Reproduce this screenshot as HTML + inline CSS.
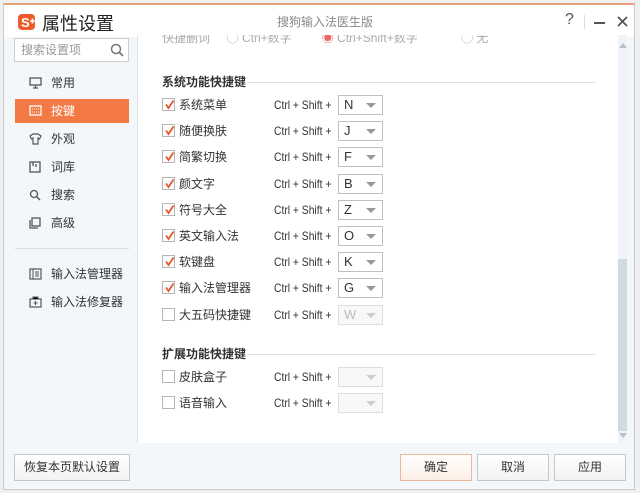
<!DOCTYPE html>
<html><head><meta charset="utf-8"><style>
*{margin:0;padding:0;box-sizing:border-box}
body{width:640px;height:493px;background:#f0f0f0;position:relative;overflow:hidden;font-family:"Liberation Sans","Noto Sans CJK SC",sans-serif;font-size:12px;color:#333}
.win{position:absolute;left:3px;top:3px;width:632px;height:487px;background:#f4f7fa;border:1px solid #c8ccd0;border-top:2px solid #e8a37a}
.a{position:absolute}
.title{left:0;top:0;width:630px;height:32px;background:#fff}
.content{left:133px;top:30px;width:490px;height:408px;background:#fff;border-left:1px solid #dde2e6;overflow:hidden}
.nav{position:absolute;left:0;width:125px;height:24px;line-height:24px;font-size:12px;color:#333}
.nav span.t{position:absolute;left:36px}
.nav svg{position:absolute;left:14px;top:6px}
.cb{position:absolute;width:13px;height:13px;border:1px solid #b5b5b5;background:#fff}
.cb svg{position:absolute;left:1px;top:0}
.lbl{position:absolute;font-size:12px;color:#333;line-height:16px}
.cs{position:absolute;font-size:12px;color:#333;line-height:16px;transform:scaleX(0.86);transform-origin:0 0;white-space:nowrap}
.dd{position:absolute;width:45px;height:20px;border:1px solid #bfbfbf;background:#fff;font-size:13px;line-height:18px;padding-left:5px}
.dd:after{content:"";position:absolute;right:6px;top:7px;border-left:5px solid transparent;border-right:5px solid transparent;border-top:5px solid #999}
.dd.dis{border-color:#ddd;color:#bbb;background:#f8f8f8}
.dd.dis:after{border-top-color:#ccc}
.h{position:absolute;font-weight:bold;font-size:12px;color:#333}
.ln{position:absolute;height:1px;background:#dde2e6}
.btn{position:absolute;height:27px;border:1px solid #c6c6c6;background:linear-gradient(#fff,#f2f2f2);text-align:center;line-height:25px;font-size:12px;color:#333}
</style></head><body>
<div class="win">
<div class="a title"></div>
<svg class="a" style="left:13px;top:7px" width="20" height="20" viewBox="0 0 20 20"><rect x="1" y="2" width="17" height="16" rx="4" fill="#ef5a2a"/><text x="4" y="15" font-size="13" font-weight="bold" fill="#fff" font-family="Liberation Sans">S</text><path d="M13 9h5M15.5 6.5v5" stroke="#fff" stroke-width="1.6"/></svg>
<div class="a" style="left:38px;top:5px;font-size:18px;color:#222">属性设置</div>
<div class="a" style="left:273px;top:8px;font-size:12px;color:#888">搜狗输入法医生版</div>
<div class="a" style="left:561px;top:6px;font-size:16px;color:#555">?</div>
<div class="a" style="left:580px;top:10px;width:1px;height:14px;background:#ddd"></div>
<div class="a" style="left:590px;top:17px;width:11px;height:2px;background:#555"></div>
<svg class="a" style="left:613px;top:11px" width="11" height="11"><path d="M1 1L10 10M10 1L1 10" stroke="#555" stroke-width="1.8"/></svg>

<div class="a" style="left:10px;top:33px;width:115px;height:24px;border:1px solid #c9cdd1;background:#fff;color:#999;font-size:12px;line-height:22px;padding-left:6px">搜索设置项
<svg style="position:absolute;right:4px;top:4px" width="14" height="14"><circle cx="6" cy="6" r="4.5" fill="none" stroke="#777" stroke-width="1.5"/><path d="M9.5 9.5L13 13" stroke="#777" stroke-width="1.8"/></svg></div>

<div class="nav" style="left:11px;top:66px"><svg width="13" height="12"><rect x="1" y="1" width="11" height="7" fill="none" stroke="#555" stroke-width="1.3"/><path d="M4 11h5M6.5 8v3" stroke="#555" stroke-width="1.3"/></svg><span class="t">常用</span></div>
<div class="nav" style="left:11px;top:94px;background:#f47a45;color:#fff;width:114px"><svg width="13" height="12"><rect x="1" y="1" width="11" height="9" fill="none" stroke="#fff" stroke-width="1.3"/><path d="M3 4h7M3 7h7" stroke="#fff" stroke-width="1" stroke-dasharray="1 1"/></svg><span class="t">按键</span></div>
<div class="nav" style="left:11px;top:122px"><svg width="13" height="12"><path d="M1 3l3-2h5l3 2-1.5 3-1.5-1v6H4V5L2.5 6z" fill="none" stroke="#555" stroke-width="1.2"/></svg><span class="t">外观</span></div>
<div class="nav" style="left:11px;top:150px"><svg width="13" height="12"><rect x="1" y="1" width="10" height="10" fill="none" stroke="#555" stroke-width="1.3"/><path d="M4 1v4M7 3v3" stroke="#555" stroke-width="1.3"/></svg><span class="t">词库</span></div>
<div class="nav" style="left:11px;top:178px"><svg width="13" height="12"><circle cx="5" cy="5" r="3.5" fill="none" stroke="#555" stroke-width="1.3"/><path d="M7.5 7.5L11 11" stroke="#555" stroke-width="1.5"/></svg><span class="t">搜索</span></div>
<div class="nav" style="left:11px;top:206px"><svg width="13" height="12"><rect x="3" y="1" width="8" height="8" fill="none" stroke="#555" stroke-width="1.3"/><path d="M1 3v8h8" fill="none" stroke="#555" stroke-width="1.3"/></svg><span class="t">高级</span></div>
<div class="a" style="left:11px;top:243px;width:114px;height:1px;background:#d8dde2"></div>
<div class="nav" style="left:11px;top:257px"><svg width="13" height="12"><rect x="1" y="1" width="11" height="10" fill="none" stroke="#555" stroke-width="1.2"/><path d="M4 1v10M6 4h4M6 6h4M6 8h4" stroke="#555"/></svg><span class="t">输入法管理器</span></div>
<div class="nav" style="left:11px;top:285px"><svg width="13" height="12"><rect x="1" y="3" width="11" height="8" fill="none" stroke="#555" stroke-width="1.2"/><path d="M4 3V1h5v2M6.5 5v4M4.5 7h4" stroke="#555" stroke-width="1.1"/></svg><span class="t">输入法修复器</span></div>

<div class="a content">
 <div class="lbl" style="left:24px;top:-3px;color:#aaa;line-height:12px">快捷删词 &nbsp;&nbsp;&nbsp; ◯ Ctrl+数字 &nbsp;&nbsp;&nbsp;&nbsp;&nbsp;&nbsp;&nbsp; <span style="color:#e66">◉</span> Ctrl+Shift+数字 &nbsp;&nbsp;&nbsp;&nbsp;&nbsp;&nbsp;&nbsp;&nbsp;&nbsp;&nbsp;&nbsp; ◯ 无</div>
 <div class="h" style="left:24px;top:38px">系统功能快捷键</div>
 <div class="ln" style="left:109px;top:47px;width:349px"></div>
 <div class="h" style="left:24px;top:310px">扩展功能快捷键</div>
 <div class="ln" style="left:109px;top:319px;width:349px"></div>
 <div class="a" style="left:480px;top:0;width:10px;height:408px;background:#f0f4f8"></div>
 <div class="a" style="left:480px;top:224px;width:10px;height:172px;background:#d2dadd"></div>
 <div class="a" style="left:481px;top:8px;border-left:4px solid transparent;border-right:4px solid transparent;border-bottom:5px solid #b8c0c6"></div>
 <div class="a" style="left:481px;top:398px;border-left:4px solid transparent;border-right:4px solid transparent;border-top:5px solid #b8c0c6"></div>
 <div id="rows"></div>
</div>

<div class="btn" style="left:10px;top:449px;width:116px">恢复本页默认设置</div>
<div class="btn" style="left:396px;top:449px;width:72px;border-color:#eab89c;background:linear-gradient(#fff,#fbeee6)">确定</div>
<div class="btn" style="left:473px;top:449px;width:72px">取消</div>
<div class="btn" style="left:550px;top:449px;width:72px">应用</div>
</div>
<script>
var r=[["系统菜单","N",1],["随便换肤","J",1],["简繁切换","F",1],["颜文字","B",1],["符号大全","Z",1],["英文输入法","O",1],["软键盘","K",1],["输入法管理器","G",1],["大五码快捷键","W",0]];
var h="";
function row(y,l,k,c,dis){
 y=Math.round(y);
 h+='<div class="cb" style="left:24px;top:'+(y-7)+'px">'+(c?'<svg width="11" height="11"><path d="M2 5.5L4.5 9 9.5 1.5" fill="none" stroke="#e8572a" stroke-width="1.8"/></svg>':'')+'</div>';
 h+='<div class="lbl" style="left:41px;top:'+(y-8)+'px">'+l+'</div>';
 h+='<div class="cs" style="left:136px;top:'+(y-8)+'px">Ctrl + Shift +</div>';
 h+='<div class="dd'+(dis?' dis':'')+'" style="left:200px;top:'+(y-10)+'px">'+k+'</div>';
}
r.forEach(function(a,i){row(70+i*26.2,a[0],a[1],a[2],!a[2])});
row(342,"皮肤盒子","",0,1);row(368,"语音输入","",0,1);
document.getElementById("rows").innerHTML=h;
</script>
</body></html>
